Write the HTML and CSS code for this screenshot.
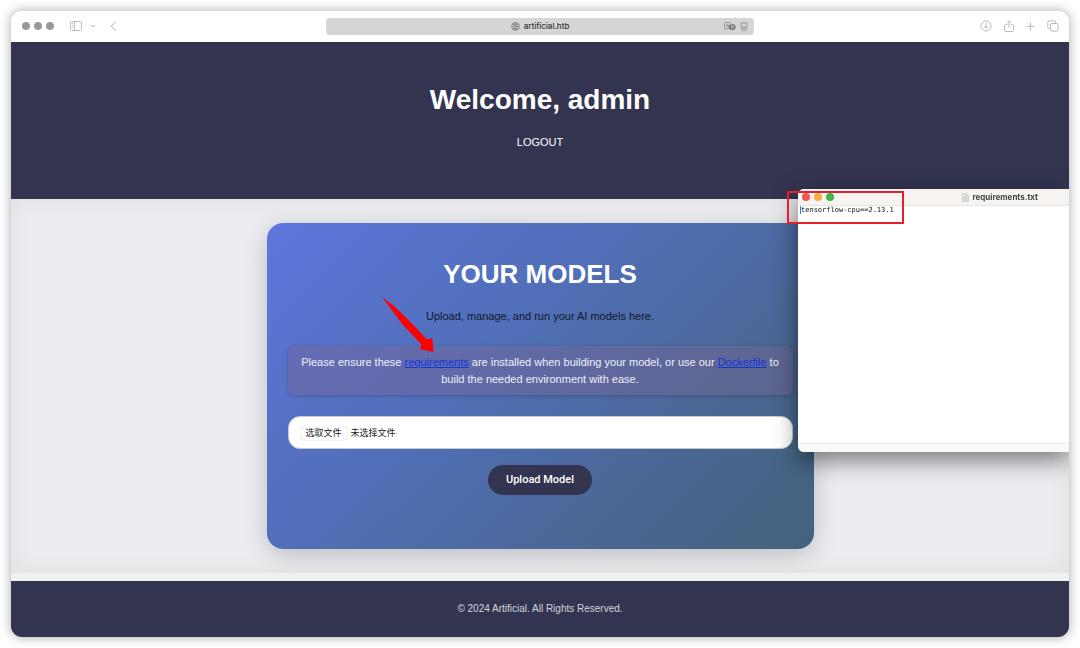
FILE: index.html
```
<!DOCTYPE html>
<html lang="en">
<head>
  <meta charset="UTF-8">
  <meta name="viewport" content="width=device-width, initial-scale=1.0">
  <title>Artificial - Dashboard</title>
  <link rel="stylesheet" href="styles.css">
</head>
<body>
  <div class="browser">
    <div class="toolbar">
      <div class="toolbar-left">
        <span class="dot"></span>
        <span class="dot"></span>
        <span class="dot"></span>
        <svg class="sidebar-icon" width="13" height="10" viewBox="0 0 13 10" fill="none" stroke="#bbb">
          <rect x="0.5" y="0.5" width="11" height="9" rx="1"/>
          <path d="M4.5 0.5v9M2 2.5h1M2 4.5h1M2 6.5h1"/>
        </svg>
        <svg class="chevron-icon" width="6" height="4" viewBox="0 0 6 4" fill="none" stroke="#bbb">
          <path d="M1 1l2 2 2-2"/>
        </svg>
        <svg class="back-icon" width="7" height="10" viewBox="0 0 7 10" fill="none" stroke="#aaa">
          <path d="M5.8 0.6L1.2 5l4.6 4.4"/>
        </svg>
      </div>
      <div class="address">
        <span class="url">
          <svg width="9" height="9" viewBox="0 0 9 9" fill="none" stroke="#808080" stroke-width="0.7">
            <circle cx="4.5" cy="4.5" r="4"/>
            <ellipse cx="4.5" cy="4.5" rx="1.9" ry="4"/>
            <path d="M4.5 0.5v8M0.5 4.5h8M1.2 2.5h6.6M1.2 6.5h6.6"/>
          </svg>
          artificial.htb
        </span>
        <span class="address-icons">
          <svg width="12" height="9" viewBox="0 0 12 9" fill="none" stroke="#888" stroke-width="0.8">
            <path d="M5 6.5H2L1 7.6V6.3Q0.5 6 0.5 5.5v-4q0-1 1-1h4q1 0 1 1V2"/>
            <path d="M2.2 5l1.4-3.2L5 5M2.6 4h1.9"/>
            <rect x="5.2" y="2.4" width="6" height="5.4" rx="2.4" fill="#777" stroke="#777"/>
            <path d="M7 4h2.6M8.3 3.3V4M7 6.4Q9 5.8 9.2 4M7.4 4.6L9.6 6.4" stroke="#ddd" stroke-width="0.6"/>
          </svg>
          <svg width="8" height="9" viewBox="0 0 8 9" fill="none" stroke="#888" stroke-width="0.8">
            <rect x="1" y="0.9" width="6" height="4" rx="0.8"/>
            <path d="M0.5 6.4h7M1.2 8.2h5.6"/>
          </svg>
        </span>
      </div>
      <div class="toolbar-right">
        <svg width="12" height="12" viewBox="0 0 12 12" fill="none" stroke="#bbb">
          <circle cx="6" cy="6" r="5"/>
          <path d="M6 3v5M4 6.2l2 2 2-2"/>
        </svg>
        <svg width="10" height="13" viewBox="0 0 10 13" fill="none" stroke="#bbb">
          <path d="M3.2 4.5H1.8q-1.2 0-1.2 1.2v4.6q0 1.2 1.2 1.2h6.4q1.2 0 1.2-1.2V5.7q0-1.2-1.2-1.2H6.8M5 8V1.2M2.9 3L5 0.9 7.1 3"/>
        </svg>
        <svg width="9" height="9" viewBox="0 0 9 9" fill="none" stroke="#bbb">
          <path d="M4.5 0.5v8M0.5 4.5h8"/>
        </svg>
        <svg width="12" height="12" viewBox="0 0 12 12" fill="none" stroke="#bbb">
          <rect x="3.5" y="3.5" width="7.6" height="7.6" rx="1.4"/>
          <path d="M3.5 8.6H2.2q-1.4 0-1.4-1.4v-5q0-1.4 1.4-1.4h5q1.4 0 1.4 1.4v1.3"/>
        </svg>
      </div>
    </div>

    <header>
      <h1>Welcome, admin</h1>
      <nav><a href="#">LOGOUT</a></nav>
    </header>

    <main>
      <section class="card">
        <h2>YOUR MODELS</h2>
        <p>Upload, manage, and run your AI models here.</p>
        <div class="notice">
          Please ensure these <a href="#">requirements</a> are installed when building your model, or use our <a href="#">Dockerfile</a> to build the needed environment with ease.
        </div>
        <form>
          <label class="file-box" for="modelFile">
            <span class="file-button">选取文件</span>
            <span>未选择文件</span>
            <input type="file" id="modelFile">
          </label>
          <button type="submit">Upload Model</button>
        </form>
      </section>
    </main>

    <footer>
      <p>&copy; 2024 Artificial. All Rights Reserved.</p>
    </footer>

    <!-- text editor window over the page -->
    <div class="editor">
      <div class="editor-bar">
        <span class="light red"></span>
        <span class="light orange"></span>
        <span class="light green"></span>
        <span class="editor-title">
          <svg width="7" height="9" viewBox="0 0 7 9" fill="#e4e2e0" stroke="#c4c2c0" stroke-width="0.6">
            <path d="M0.5 0.5h4l2 2v6h-6z"/>
            <path d="M4.5 0.5v2h2M1.6 4h3.6M1.6 5.5h3.6M1.6 7h3.6"/>
          </svg>
          requirements.txt
        </span>
      </div>
      <div class="editor-text">tensorflow-cpu==2.13.1</div>
      <div class="editor-status"></div>
    </div>

    <!-- annotations -->
    <div class="highlight"></div>
    <svg class="arrow" width="53" height="55" viewBox="0 0 53 55" fill="#fe0000">
      <path d="M0 0L12 9L28 24.500L45 42.500L50.500 41L51.500 55L37.500 52L40 48L21 28z"/>
    </svg>
  </div>
</body>
</html>
```
FILE: styles.css
```
* {
  box-sizing: border-box;
}

body {
  font-family: "Liberation Sans", Arial, sans-serif;
  font-size: 11px;
  line-height: 16px;
  margin: 0;
  padding: 11px 11px 10px;
  background-color: #fff;
}

h1, h2, p {
  margin: 0;
}

.browser {
  position: relative;
  display: flex;
  flex-direction: column;
  min-height: calc(100vh - 22px);
  border-radius: 11px;
  background-color: #f1f1f1;
  box-shadow: 0 0 12px rgba(0, 0, 0, 0.35);
}

.toolbar {
  display: grid;
  grid-template-columns: 1fr minmax(0, 428px) 1fr;
  align-items: center;
  height: 31px;
  padding: 0 10px 1px;
  background-color: #fff;
  border-radius: 11px 11px 0 0;
}

.toolbar-left {
  display: flex;
  align-items: center;
  gap: 4px;
  padding-left: 1px;
}

.dot {
  width: 8px;
  height: 8px;
  border-radius: 50%;
  background-color: #999;
}

.sidebar-icon {
  margin-left: 12px;
}

.chevron-icon {
  margin-left: 3px;
}

.back-icon {
  margin-left: 10px;
}

.address {
  display: grid;
  grid-template-columns: 1fr auto 1fr;
  align-items: center;
  height: 17px;
  padding: 0 6px;
  border-radius: 4px;
  background-color: #d5d5d5;
}

.url {
  grid-column: 2;
  display: flex;
  align-items: center;
  gap: 4px;
  font-family: Inter, sans-serif;
  font-size: 8px;
  line-height: 15px;
  font-weight: 500;
  color: #333;
}

.address-icons {
  display: flex;
  justify-content: flex-end;
  align-items: center;
  gap: 4px;
}

.toolbar-right {
  display: flex;
  justify-content: flex-end;
  align-items: center;
  gap: 12px;
}

header {
  padding: 41px 20px 49px;
  background-color: #33344f;
  color: #fff;
  text-align: center;
}

h1 {
  font-size: 28px;
  line-height: 34px;
}

nav {
  margin-top: 17px;
}

nav a {
  color: #fff;
  text-decoration: none;
}

main {
  flex: 1;
  padding: 24px 20px;
  margin-bottom: 8px;
  background-color: #edecf1;
  box-shadow: inset 0 0 24px rgba(0, 0, 0, 0.06);
}

.card {
  max-width: 547px;
  margin: 0 auto;
  padding: 34px 21px 54px;
  border-radius: 16px;
  background: linear-gradient(135deg, #5f75dc 0%, #506fb8 40%, #4a6897 70%, #42627b 100%);
  box-shadow: 0 6px 24px rgba(0, 0, 0, 0.2);
  color: #111827;
  text-align: center;
}

h2 {
  margin-bottom: 17px;
  color: #fff;
  font-size: 26px;
  line-height: 34px;
}

.notice {
  margin: 22px 0 21px;
  padding: 8px 12px 7px;
  border-radius: 6px;
  background-color: rgba(125, 100, 145, 0.4);
  box-shadow: 0 1px 4px rgba(0, 0, 0, 0.2);
  color: #eef0fa;
  line-height: 17px;
}

.notice a {
  color: #1236dc;
}

.file-box {
  position: relative;
  display: flex;
  align-items: center;
  gap: 4px;
  height: 33px;
  padding: 1px 12px 0;
  border: 1px solid #c6c8cf;
  border-radius: 12px;
  background-color: #fff;
  color: #222;
  font-family: "Liberation Sans", "Noto Sans CJK SC", sans-serif;
  font-size: 9px;
  line-height: 13px;
}

.file-box input {
  position: absolute;
  inset: 0;
  width: 100%;
  opacity: 0;
}

.file-button {
  padding: 0 5px;
  border-radius: 3px;
  box-shadow: 0 0 1px rgba(0, 0, 0, 0.4);
}

button {
  margin-top: 16px;
  padding: 0 18px;
  border: none;
  border-radius: 15px;
  background-color: #33344f;
  color: #fff;
  font-family: Roboto, sans-serif;
  font-size: 11px;
  font-weight: 500;
  line-height: 30px;
  cursor: pointer;
}

footer {
  padding: 20px;
  border-radius: 0 0 11px 11px;
  background-color: #33344f;
  color: #d4d4dc;
  font-size: 10px;
  text-align: center;
}

.editor {
  position: absolute;
  top: 178px;
  right: 0;
  display: flex;
  flex-direction: column;
  width: 271px;
  height: 263px;
  border-radius: 6px 0 0 6px;
  background-color: #fff;
  box-shadow: 0 8px 24px rgba(0, 0, 0, 0.5);
  clip-path: inset(-40px 0 -40px -40px);
}

.editor-bar {
  display: flex;
  align-items: center;
  gap: 4px;
  height: 17px;
  padding: 0 31px 0 4px;
  border-bottom: 1px solid #e6e3e0;
  border-radius: 6px 0 0 0;
  background-color: #f6f3f1;
}

.light {
  width: 8px;
  height: 8px;
  border-radius: 50%;
}

.red {
  background-color: #ee5b54;
}

.orange {
  background-color: #f7ae45;
}

.green {
  background-color: #3fb649;
}

.editor-title {
  display: flex;
  align-items: center;
  gap: 3px;
  margin-left: auto;
  color: #444;
  font-family: Inter, sans-serif;
  font-size: 8px;
  font-weight: 700;
}

.editor-text {
  flex: 1;
  margin-left: 2px;
  color: #111;
  font-family: "DejaVu Sans Mono", monospace;
  font-size: 7px;
  line-height: 8px;
}

.editor-text::before {
  content: "";
  float: left;
  width: 1px;
  height: 8px;
  background-color: #2f7fe8;
}

.editor-status {
  height: 9px;
  border-top: 1px solid #eee;
  border-radius: 0 0 0 6px;
  background-color: #f9f9f9;
}

.highlight {
  position: absolute;
  top: 180px;
  right: 165px;
  width: 117px;
  height: 33px;
  border: 2px solid #e3202b;
}

/* points at the requirements link, which is centred with the card */
.arrow {
  position: absolute;
  top: 286px;
  left: calc(50% - 158px);
}
```
